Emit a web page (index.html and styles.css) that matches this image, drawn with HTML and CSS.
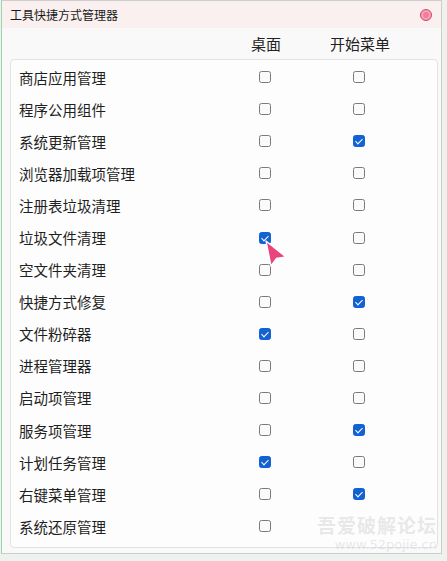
FILE: index.html
```html
<!DOCTYPE html>
<html lang="zh">
<head>
<meta charset="utf-8">
<link rel="stylesheet" href="styles.css">
</head>
<body>
<div class="window">
  <div class="titlebar">
    <span class="title">工具快捷方式管理器</span>
    <span class="close"></span>
  </div>
  <div class="content">
    <div class="grid header">
      <span></span>
      <span class="col">桌面</span>
      <span class="col">开始菜单</span>
    </div>
    <div class="panel">
      <div class="grid row"><span class="name">商店应用管理</span><span class="col"><i class="cb"></i></span><span class="col"><i class="cb"></i></span></div>
      <div class="grid row"><span class="name">程序公用组件</span><span class="col"><i class="cb"></i></span><span class="col"><i class="cb"></i></span></div>
      <div class="grid row"><span class="name">系统更新管理</span><span class="col"><i class="cb"></i></span><span class="col"><i class="cb on"></i></span></div>
      <div class="grid row"><span class="name">浏览器加载项管理</span><span class="col"><i class="cb"></i></span><span class="col"><i class="cb"></i></span></div>
      <div class="grid row"><span class="name">注册表垃圾清理</span><span class="col"><i class="cb"></i></span><span class="col"><i class="cb"></i></span></div>
      <div class="grid row"><span class="name">垃圾文件清理</span><span class="col"><i class="cb on"></i></span><span class="col"><i class="cb"></i></span></div>
      <div class="grid row"><span class="name">空文件夹清理</span><span class="col"><i class="cb"></i></span><span class="col"><i class="cb"></i></span></div>
      <div class="grid row"><span class="name">快捷方式修复</span><span class="col"><i class="cb"></i></span><span class="col"><i class="cb on"></i></span></div>
      <div class="grid row"><span class="name">文件粉碎器</span><span class="col"><i class="cb on"></i></span><span class="col"><i class="cb"></i></span></div>
      <div class="grid row"><span class="name">进程管理器</span><span class="col"><i class="cb"></i></span><span class="col"><i class="cb"></i></span></div>
      <div class="grid row"><span class="name">启动项管理</span><span class="col"><i class="cb"></i></span><span class="col"><i class="cb"></i></span></div>
      <div class="grid row"><span class="name">服务项管理</span><span class="col"><i class="cb"></i></span><span class="col"><i class="cb on"></i></span></div>
      <div class="grid row"><span class="name">计划任务管理</span><span class="col"><i class="cb on"></i></span><span class="col"><i class="cb"></i></span></div>
      <div class="grid row"><span class="name">右键菜单管理</span><span class="col"><i class="cb"></i></span><span class="col"><i class="cb on"></i></span></div>
      <div class="grid row"><span class="name">系统还原管理</span><span class="col"><i class="cb"></i></span><span class="col"></span></div>
    </div>
  </div>
  <svg class="cursor" width="26" height="28" viewBox="0 0 26 28"><path d="M3 2 L23 18 L13.5 19.5 L8 27 Z" fill="#e8457f" stroke="#fff" stroke-width="1.3" stroke-linejoin="round"/></svg>
  <div class="watermark"><div class="wm1">吾爱破解论坛</div><div class="wm2">www.52pojie.cn</div></div>
</div>
</body>
</html>
```
FILE: styles.css
```css
html, body {
  margin: 0;
  padding: 0;
  background: #eef2ef;
  font-family: "Noto Sans CJK SC", "Noto Sans", sans-serif;
}
.window {
  position: relative;
  box-sizing: border-box;
  width: 441px;
  height: 554px;
  margin-left: 1px;
  border: 1px solid #cdcdcd;
  border-left-color: #9fd3b0;
  background: #f9f9f9;
  display: flex;
  flex-direction: column;
  overflow: hidden;
}
.titlebar {
  height: 27px;
  flex: none;
  background: #fbf0f0;
  display: flex;
  align-items: center;
  justify-content: space-between;
  padding: 0 9px 0 8px;
}
.title {
  font-size: 12px;
  color: #1a1a1a;
}
.close {
  width: 10px;
  height: 10px;
  border-radius: 50%;
  background: #ee7f98;
  border: 1.5px solid #d24a6c;
  box-shadow: inset 0 0 0 2px #f7a4b6;
}
.content {
  flex: 1;
  display: flex;
  flex-direction: column;
  padding: 0 3px 5px 8px;
}
.grid {
  display: grid;
  grid-template-columns: 1fr 94px 94px 31px;
  align-items: center;
}
.header {
  height: 31px;
  font-size: 15px;
  color: #222;
}
.col {
  display: flex;
  justify-content: center;
  align-items: center;
}
.panel {
  background: #fdfdfd;
  border: 1px solid #e3e3e3;
  border-radius: 4px;
  padding-top: 1px;
  flex: 1;
}
.row {
  height: 32.1px;
  font-size: 14.5px;
  color: #1f1f1f;
}
.name {
  padding-left: 8px;
}
.cb {
  box-sizing: border-box;
  width: 12px;
  height: 12px;
  border: 1px solid #7a7a7a;
  border-radius: 2.5px;
  background: #fafafa;
  position: relative;
}
.cb.on {
  background: #1262d4;
  border-color: #1262d4;
}
.cb.on::after {
  content: "";
  position: absolute;
  left: 3px;
  top: 1px;
  width: 3px;
  height: 6px;
  border: solid #fff;
  border-width: 0 1.3px 1.3px 0;
  transform: rotate(45deg);
}
.cursor {
  position: absolute;
  left: 261px;
  top: 238px;
}
.watermark {
  position: absolute;
  right: 4px;
  bottom: 2px;
  text-align: right;
  color: rgba(205, 205, 205, 0.45);
  line-height: 1;
}
.wm1 {
  font-size: 19px;
  font-weight: bold;
  letter-spacing: 1px;
}
.wm2 {
  font-size: 13px;
  margin-top: 4px;
  font-family: "DejaVu Sans", sans-serif;
}
```
